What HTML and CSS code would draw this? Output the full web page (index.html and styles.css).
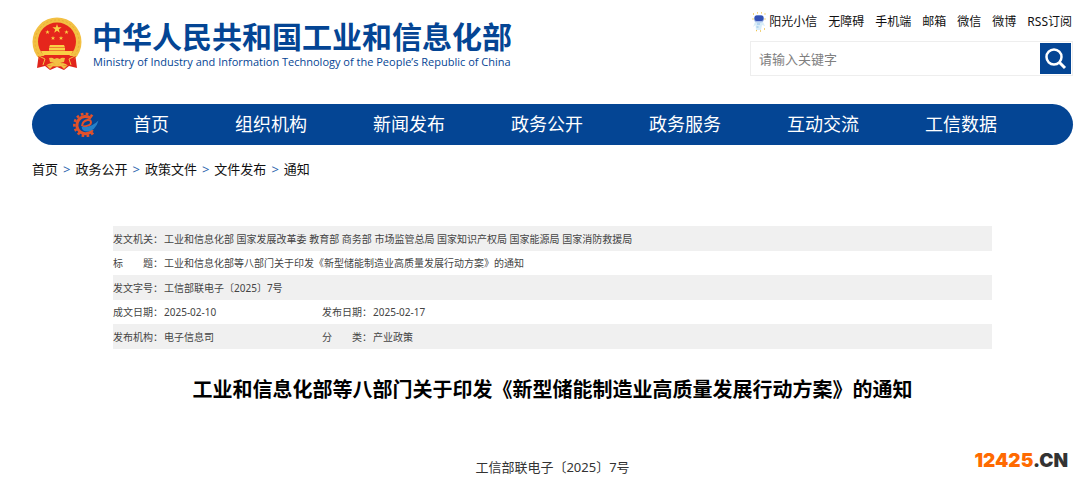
FILE: index.html
```html
<!DOCTYPE html>
<html lang="zh-CN">
<head>
    <meta charset="UTF-8">
    <meta name="viewport" content="width=device-width, initial-scale=1.0">
    <title>工业和信息化部等八部门关于印发《新型储能制造业高质量发展行动方案》的通知</title>
    <link rel="stylesheet" href="styles.css">
</head>
<body>
    <div class="page">
        <header class="header">
            <a class="logo" href="#">
                <svg class="emblem" viewBox="0 0 50 54" aria-hidden="true">
                    <path d="M7 36 L5 51 L13 49 L18 53 L25 50 L32 53 L37 49 L45 51 L43 36 Z" fill="#e0241b"/>
                    <circle cx="25" cy="25" r="24.500" fill="#f3c043"/>
                    <circle cx="25" cy="25" r="22" fill="none" stroke="#e8ae34" stroke-width="1" stroke-dasharray="2 2"/>
                    <circle cx="25" cy="24.500" r="19" fill="#e5261c"/>
                    <path d="M25 7l1.100 3.300h3.500l-2.800 2.100 1 3.300-2.800-2-2.800 2 1-3.300-2.800-2.100h3.500z" fill="#f9cf45"/>
                    <path id="star" d="M15.500 13l.6 1.500h1.600l-1.300 1 .5 1.600-1.400-1-1.400 1 .5-1.600-1.300-1h1.600z" fill="#f9cf45"/>
                    <use href="#star" x="19"/>
                    <use href="#star" x="5.500" y="6"/>
                    <use href="#star" x="13.500" y="6"/>
                    <path d="M18 28h14l1 2.500H17zM17 31h16v2.500H17zM9 34h32l-2 4H11z" fill="#f9cf45"/>
                    <path d="M6 39h38l-5 10-8-3H19l-8 3z" fill="#e5261c"/>
                    <path d="M17 41q4-1 5 1l3-1 3 1q1-2 5-1l-1 4-4 1-3 2-3-2-4-1zM14 48l7 1-3 3zM36 48l-7 1 3 3z" fill="#f3c043"/>
                    <path d="M5 38l8 4-2 6M45 38l-8 4 2 6" fill="none" stroke="#f3c043" stroke-width="1"/>
                </svg>
                <span class="logo-text">
                    <strong class="logo-cn">中华人民共和国工业和信息化部</strong>
                    <span class="logo-en">Ministry of Industry and Information Technology of the People’s Republic of China</span>
                </span>
            </a>
            <div class="tools">
                <nav class="top-links">
                    <a href="#">
                        <svg class="robot" viewBox="0 0 14 20" aria-hidden="true">
                            <path d="M1 2h1M5 .8h1M9 .8h1M12.500 2h1M.5 7h1M12.500 7h1M4 18.500h1M8 19h1M12 17h1" stroke="#edc552" stroke-width="1.300"/>
                            <path d="M3 10q4-2 8 0l2 4-3-1-1 5H4l-.5-5L1 15z" fill="#d9edf8"/>
                            <rect x="2" y="3" width="10" height="7.500" rx="3.500" fill="#a7bee9"/>
                            <rect x="2.500" y="3.500" width="9" height="5.500" rx="2.200" fill="#3451b5"/>
                            <path d="M5 12h3M4.500 15h2" stroke="#8fbfe8"/>
                        </svg>阳光小信</a>
                    <a href="#">无障碍</a>
                    <a href="#">手机端</a>
                    <a href="#">邮箱</a>
                    <a href="#">微信</a>
                    <a href="#">微博</a>
                    <a href="#">RSS订阅</a>
                </nav>
                <form class="search">
                    <input type="text" placeholder="请输入关键字" aria-label="请输入关键字">
                    <button type="submit" aria-label="搜索">
                        <svg viewBox="0 0 31 31" aria-hidden="true">
                            <circle cx="14" cy="14" r="7.500" fill="none" stroke="#fff" stroke-width="2.500"/>
                            <path d="M19 19l6 6" stroke="#fff" stroke-width="3"/>
                        </svg>
                    </button>
                </form>
            </div>
        </header>

        <nav class="menu">
            <svg class="gear" viewBox="0 0 26 26" aria-hidden="true">
                <path d="M19.500 4.500A11 11 0 1 0 21.500 19" fill="none" stroke="#e2512a" stroke-width="2.600" stroke-dasharray="2.600 2.200"/>
                <path d="M18 6.500A8.600 8.600 0 1 0 19.500 18" fill="none" stroke="#e2512a" stroke-width="3"/>
                <path d="M9.500 14.500q8.500-.5 8.500-4 0-3-3.500-2.500-5 1-5.500 6" fill="none" stroke="#e2512a" stroke-width="2"/>
                <path d="M8.500 14.500q9 2 17-6-3 10.500-11.500 11-5 0-5.500-5z" fill="#2581c8"/>
            </svg>
            <a href="#">首页</a>
            <a href="#">组织机构</a>
            <a href="#">新闻发布</a>
            <a href="#">政务公开</a>
            <a href="#">政务服务</a>
            <a href="#">互动交流</a>
            <a href="#">工信数据</a>
        </nav>

        <div class="crumbs">
            <a href="#">首页</a><span>&gt;</span>
            <a href="#">政务公开</a><span>&gt;</span>
            <a href="#">政策文件</a><span>&gt;</span>
            <a href="#">文件发布</a><span>&gt;</span>
            <a href="#">通知</a>
        </div>

        <main class="article">
            <table class="info">
                <colgroup>
                    <col class="col-label">
                    <col class="col-date">
                    <col class="col-label">
                    <col>
                </colgroup>
                <tr>
                    <th scope="row">发文机关：</th>
                    <td colspan="3">工业和信息化部 国家发展改革委 教育部 商务部 市场监管总局 国家知识产权局 国家能源局 国家消防救援局</td>
                </tr>
                <tr>
                    <th scope="row">标　　题：</th>
                    <td colspan="3">工业和信息化部等八部门关于印发《新型储能制造业高质量发展行动方案》的通知</td>
                </tr>
                <tr>
                    <th scope="row">发文字号：</th>
                    <td colspan="3">工信部联电子〔2025〕7号</td>
                </tr>
                <tr>
                    <th scope="row">成文日期：</th>
                    <td>2025-02-10</td>
                    <th scope="row">发布日期：</th>
                    <td>2025-02-17</td>
                </tr>
                <tr>
                    <th scope="row">发布机构：</th>
                    <td>电子信息司</td>
                    <th scope="row">分　　类：</th>
                    <td>产业政策</td>
                </tr>
            </table>
            <h1>工业和信息化部等八部门关于印发《新型储能制造业高质量发展行动方案》的通知</h1>
            <p class="doc-no">工信部联电子〔2025〕7号</p>
        </main>
    </div>
    <div class="site-mark"><span>12425</span>.CN</div>
</body>
</html>
```
FILE: styles.css
```css
* {
    box-sizing: border-box;
}
body {
    margin: 0;
    background: #fff;
    color: #111;
    font-family: "Noto Sans", "Noto Sans CJK SC", sans-serif;
    font-size: 13px;
}
a {
    color: inherit;
    text-decoration: none;
}
svg {
    display: block;
    flex: none;
}
.page {
    padding: 12px 7px 0 32px;
}

/* header */
.header {
    display: flex;
    justify-content: space-between;
    align-items: flex-start;
}
.logo {
    display: flex;
    gap: 10px;
    padding-top: 5px;
    color: #044594;
}
.emblem {
    width: 50px;
    height: 54px;
}
.logo-text {
    display: flex;
    flex-direction: column;
    padding-top: 4px;
}
.logo-cn {
    font-family: "Liberation Sans", "Noto Sans CJK SC", sans-serif;
    font-size: 30px;
    line-height: 34px;
}
.logo-en {
    padding-left: 1px;
    font-family: "Open Sans", sans-serif;
    font-size: 11px;
    font-weight: 500;
    line-height: 14px;
}
.tools {
    width: 323px;
}
.top-links {
    display: flex;
    justify-content: flex-end;
    gap: 11px;
    padding-right: 1px;
    font-size: 12px;
    line-height: 20px;
    white-space: nowrap;
}
.top-links a {
    display: flex;
    gap: 3px;
}
.robot {
    width: 14px;
    height: 20px;
}
.search {
    display: flex;
    margin-top: 9px;
    padding: 1px;
    border: 1px solid #eee;
}
.search input {
    flex: 1;
    min-width: 0;
    padding: 0 7px;
    border: 0;
    outline: 0;
    background: none;
    font: inherit;
}
.search input::placeholder {
    color: #808080;
}
.search button {
    width: 31px;
    height: 31px;
    padding: 0;
    border: 0;
    background: #044594;
}

/* menu */
.menu {
    display: flex;
    align-items: center;
    gap: 66px;
    margin-top: 28px;
    padding-left: 41px;
    border-radius: 21px;
    background: #044594;
    color: #fff;
    font-size: 18px;
    line-height: 41px;
    white-space: nowrap;
}
.gear {
    width: 26px;
    height: 26px;
    margin-right: -32px;
}
.crumbs {
    display: flex;
    gap: 5px;
    margin-top: 14px;
    line-height: 20px;
}
.crumbs span {
    color: #2a64ad;
}

/* article */
.article {
    padding: 47px 81px 0;
}
.info {
    width: 100%;
    border-collapse: collapse;
    table-layout: fixed;
    color: #444;
    font-size: 10px;
    line-height: 24px;
}
.info th,
.info td {
    padding: 0;
    font-weight: 400;
    text-align: left;
    white-space: nowrap;
}
.info tr:nth-child(odd) {
    height: 25px;
    background: #f0f0f0;
}
.col-label {
    width: 51px;
}
.col-date {
    width: 158px;
}
h1 {
    margin: 26px 0 0;
    color: #000;
    font-size: 20px;
    line-height: 30px;
    text-align: center;
    white-space: nowrap;
}
.doc-no {
    margin: 52px 0 0;
    color: #333;
    line-height: 20px;
    text-align: center;
}
.site-mark {
    position: absolute;
    right: 12px;
    bottom: 10px;
    color: #333;
    font-family: Inter, sans-serif;
    font-size: 19px;
    font-weight: 900;
    line-height: 24px;
}
.site-mark span {
    color: #ff6a00;
}
```
